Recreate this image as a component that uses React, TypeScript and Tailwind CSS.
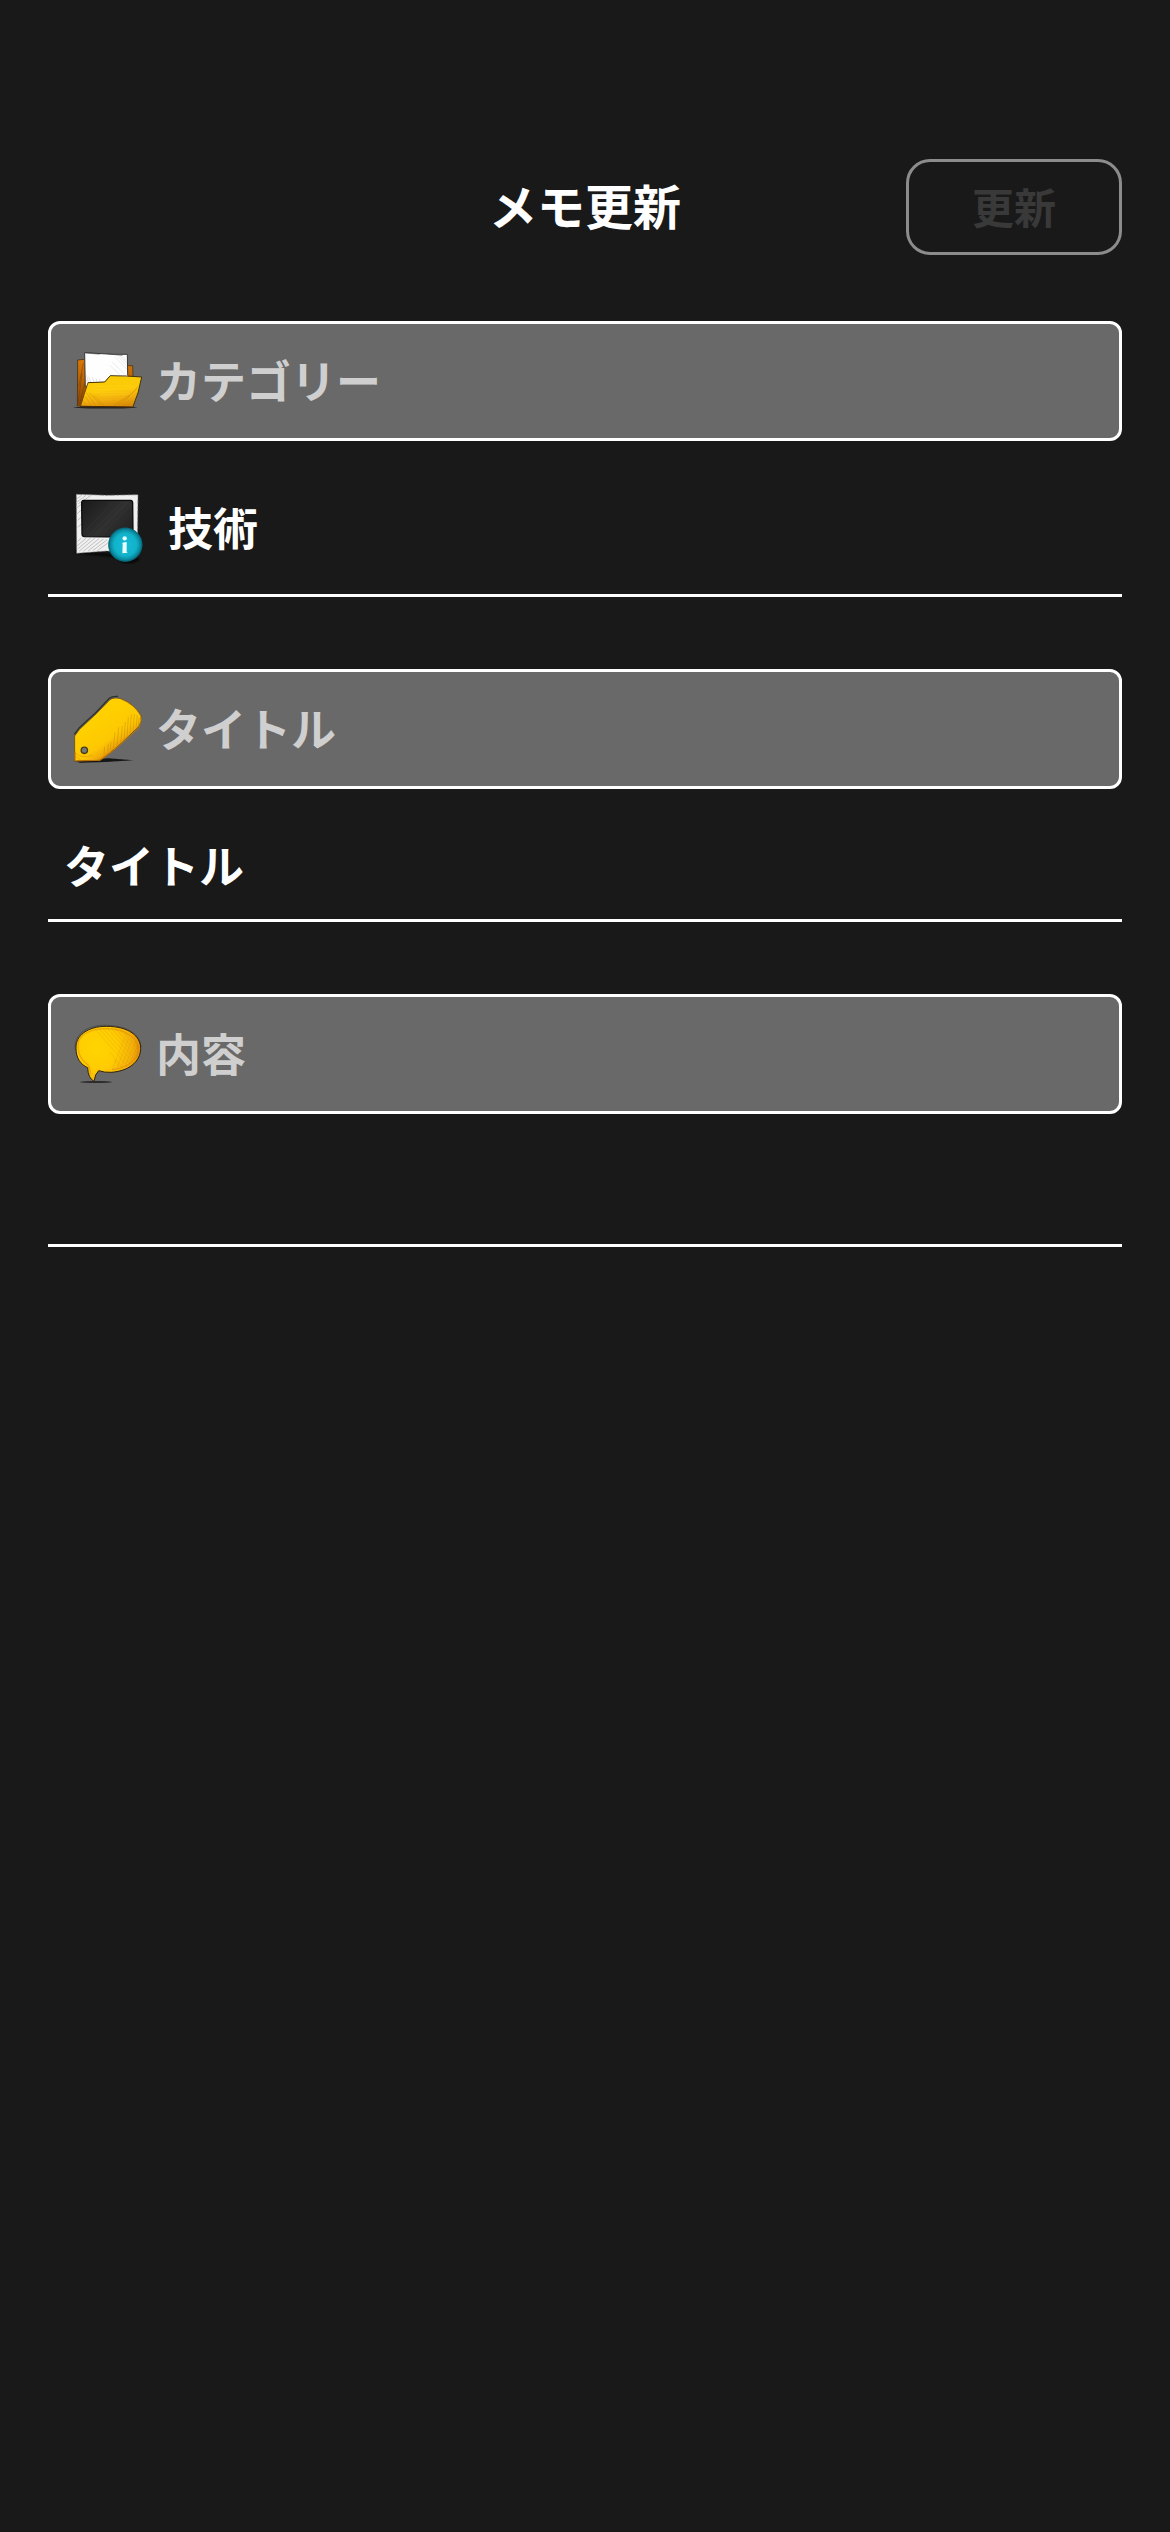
import React from "react";

function FolderIcon() {
  return (
    <svg viewBox="36 15 216 216" className="size-[72px] shrink-0" fill="none">
      <defs>
        <linearGradient id="folderFront" x1="150" y1="105" x2="160" y2="202" gradientUnits="userSpaceOnUse">
          <stop offset="0" stopColor="#f8cc06" />
          <stop offset="0.45" stopColor="#fdca08" />
          <stop offset="0.75" stopColor="#f2ae0e" />
          <stop offset="1" stopColor="#d88a08" />
        </linearGradient>
        <linearGradient id="folderBack" x1="60" y1="60" x2="62" y2="195" gradientUnits="userSpaceOnUse">
          <stop offset="0" stopColor="#d87808" />
          <stop offset="0.5" stopColor="#b35f05" />
          <stop offset="1" stopColor="#8a4705" />
        </linearGradient>
        <filter id="folderBlur" x="-20%" y="-100%" width="140%" height="300%">
          <feGaussianBlur stdDeviation="2" />
        </filter>
      </defs>
      <ellipse cx="136" cy="202" rx="96" ry="3.5" fill="#262626" filter="url(#folderBlur)" />
      <path d="M53 61 L72 58 L74 66 L203 76 L218 77 L218 120 L90 170 L62 200 L52 198Z" fill="url(#folderBack)" />
      <path d="M52 198 L53 60 L72 58 M204 77 L218 77 L219 108" stroke="#4a3115" strokeWidth="2.4" />
      <path d="M54 190 L66 100 M58 196 L74 130 M56 140 L70 70" stroke="#5e3408" strokeWidth="2" opacity="0.6" />
      <path d="M74 38 L160 43 L202 43 L203 112 L150 107 L134 125 L88 127 L76 142Z" fill="#fefefe" />
      <path d="M76 142 L74 38 L160 43 L202 43 L203 106" stroke="#262626" strokeWidth="2.6" />
      <path d="M78 39 L119 43 M140 41 L188 47" stroke="#444" strokeWidth="1.4" />
      <path d="M164 51 L200 87 M172 48 L201 77 M180 49 L201 69 M157 66 L194 103 M150 76 L178 104 M188 51 L200 62" stroke="#d4d4d4" strokeWidth="1.4" />
      <path d="M78 104 L86 125 M86 110 L92 126 M97 111 L102 125 M108 115 L110 125 M79 118 L83 129 M118 117 L122 124" stroke="#c6c6c6" strokeWidth="1.5" />
      <path d="M62 197 Q72 163 84 128 L134 126 L151 107 L245 111 Q236 159 219 200 L140 199Z" fill="url(#folderFront)" />
      <path d="M84 128 L134 126 L151 107 L200 108 L245 111 Q237 158 219 200" stroke="#3a2b0b" strokeWidth="2.8" />
      <path d="M84 128 Q72 163 62 197" stroke="#6e4807" strokeWidth="3" />
      <path d="M60 199 L140 200 L220 201" stroke="#4b2b06" strokeWidth="3" />
      <path d="M96 140 L160 138 L220 139 M104 149 L222 147 M98 157 L206 157 M120 165 L216 163" stroke="#ffda24" strokeWidth="1.3" opacity="0.8" />
      <path d="M185 196 L236 138 M174 196 L231 146 M194 196 L230 158 M204 196 L227 170 M162 196 L210 164 M80 158 L106 196 M76 170 L94 196 M88 158 L122 196 M70 184 L80 196 M100 166 L132 196" stroke="#a96806" strokeWidth="1.5" opacity="0.48" />
    </svg>
  );
}

function PhotoInfoIcon() {
  return (
    <svg viewBox="36 36 216 216" className="size-[72px] shrink-0" fill="none">
      <defs>
        <linearGradient id="photoGlass" x1="72" y1="64" x2="200" y2="180" gradientUnits="userSpaceOnUse">
          <stop offset="0" stopColor="#1b1b1b" />
          <stop offset="0.55" stopColor="#303030" />
          <stop offset="1" stopColor="#202020" />
        </linearGradient>
        <radialGradient id="infoDisc" cx="196" cy="194" r="52" gradientUnits="userSpaceOnUse">
          <stop offset="0" stopColor="#16bdd5" />
          <stop offset="0.65" stopColor="#11b2ca" />
          <stop offset="0.85" stopColor="#098da3" />
          <stop offset="1" stopColor="#065f70" />
        </radialGradient>
        <filter id="photoBlur" x="-20%" y="-50%" width="140%" height="200%">
          <feGaussianBlur stdDeviation="3" />
        </filter>
      </defs>
      <path d="M46 216 L170 228 Q200 260 236 235" stroke="#050505" strokeWidth="8" opacity="0.8" filter="url(#photoBlur)" />
      <path d="M49 43 L140 46 L234 44 L232 216 L140 213 L50 220Z" fill="#f0f0f0" />
      <path d="M49 43 L140 46 L234 44 L232 216 L140 213 L50 220Z" stroke="#797979" strokeWidth="2" strokeDasharray="17 4 9 3" />
      <path d="M51 56 L65 46 M51 66 L78 46 M55 71 L91 48 M53 184 L64 174 M52 197 L79 174 M53 207 L92 174 M57 214 L105 174 M70 214 L117 176 M84 213 L130 177 M98 212 L142 179 M112 212 L146 187 M51 83 L64 73 M51 101 L64 90 M53 121 L64 111 M53 142 L65 131" stroke="#a5a5a5" strokeWidth="1.9" />
      <path d="M71 61 L212 61 Q218 62 218 69 L219 164 Q218 171 211 171 L73 170 Q66 169 66 161 L65 69 Q65 62 71 61Z" fill="url(#photoGlass)" stroke="#0c0c0c" strokeWidth="4" />
      <path d="M86 165 L186 65 M103 166 L202 67 M122 167 L216 73 M73 157 L157 68" stroke="#424242" strokeWidth="2" opacity="0.45" />
      <circle cx="196" cy="194" r="51" fill="url(#infoDisc)" />
      <circle cx="196" cy="194" r="50" stroke="#08697a" strokeWidth="2" />
      <circle cx="194" cy="175" r="6.5" fill="#e8ffff" />
      <path d="M187 188 L200 186 L200 215 L203 218 L187 220 L188 194Z" fill="#e8ffff" />
    </svg>
  );
}

function TagIcon() {
  return (
    <svg viewBox="36 39 216 216" className="size-[72px] shrink-0" fill="none">
      <defs>
        <linearGradient id="tagBody" x1="115" y1="125" x2="176" y2="210" gradientUnits="userSpaceOnUse">
          <stop offset="0" stopColor="#ffcf00" />
          <stop offset="0.58" stopColor="#fdc803" />
          <stop offset="0.85" stopColor="#f0a90a" />
          <stop offset="1" stopColor="#c97805" />
        </linearGradient>
        <filter id="tagBlur" x="-20%" y="-100%" width="140%" height="300%">
          <feGaussianBlur stdDeviation="2" />
        </filter>
      </defs>
      <path d="M42 243 L145 235 L220 241 L135 246 L60 248Z" fill="#141414" filter="url(#tagBlur)" />
      <path d="M43 163 L58 143 L107 98 L148 55 Q156 48 174 49" stroke="#303030" strokeWidth="4" />
      <path d="M44 243 L44 168 L59 148 L108 102 L150 59 Q160 51 183 56 Q223 72 243 107 Q247 124 237 139 L177 196 Q143 226 120 241Z" fill="url(#tagBody)" stroke="#4d390d" strokeWidth="1.8" />
      <path d="M240 140 L177 197 Q143 227 120 241 L45 243 L45 215" stroke="#c17605" strokeWidth="3" />
      <path d="M182 57 Q222 72 242 107 Q247 122 238 138" stroke="#b97809" strokeWidth="2" />
      <path d="M153 185 L151 210 M165 156 L160 204 M176 142 L171 197 M187 138 L182 188 M196 126 L192 181 M205 112 L201 172 M214 103 L210 163 M223 102 L219 155 M232 104 L228 146 M237 114 L235 139 M145 191 L143 215 M134 200 L132 223" stroke="#ad7903" strokeWidth="1.4" opacity="0.75" />
      <path d="M49 221 Q66 237 98 225 M48 230 L62 240 M118 237 L166 202 M129 229 L198 171" stroke="#df960a" strokeWidth="1.6" />
      <circle cx="73" cy="211" r="9.5" fill="#777" stroke="#443c19" strokeWidth="4" />
    </svg>
  );
}

function SpeechIcon() {
  return (
    <svg viewBox="36 24 216 216" className="size-[72px] shrink-0" fill="none">
      <defs>
        <radialGradient id="speechBody" cx="108" cy="112" r="146" gradientUnits="userSpaceOnUse">
          <stop offset="0" stopColor="#ffd400" />
          <stop offset="0.45" stopColor="#ffcc02" />
          <stop offset="0.75" stopColor="#f6b20a" />
          <stop offset="1" stopColor="#d98007" />
        </radialGradient>
        <filter id="speechBlur" x="-20%" y="-100%" width="140%" height="300%">
          <feGaussianBlur stdDeviation="2" />
        </filter>
      </defs>
      <ellipse cx="108" cy="216" rx="47" ry="3" fill="#1b1b1b" opacity="0.8" filter="url(#speechBlur)" />
      <path d="M46 120 C40 72 82 43 142 46 C206 48 240 74 243 111" stroke="#3d3d3d" strokeWidth="1.6" />
      <path d="M83 173 C62 164 48 144 48 115 C46 77 83 49 139 49 C207 49 242 79 242 115 C242 157 203 184 153 187 Q134 188 116 182 Q105 192 102 214 Q84 204 83 173Z" fill="url(#speechBody)" stroke="#33250a" strokeWidth="3" />
      <path d="M54 98 C65 68 101 56 140 56 C195 57 232 82 235 116 C233 151 201 175 156 179" stroke="#da8507" strokeWidth="4" opacity="0.5" />
      <path d="M55 92 Q49 137 78 160 Q93 169 90 193" stroke="#e89308" strokeWidth="4" opacity="0.65" />
      <path d="M105 57 L198 163 M116 55 L207 158 M128 54 L216 153 M140 53 L224 147 M153 54 L231 141 M167 56 L235 132 M181 59 L238 123 M193 64 L239 115 M150 126 L185 170 M160 147 L179 173 M193 86 L156 180 M205 87 L170 177 M216 90 L182 174 M226 95 L195 169 M235 104 L207 162" stroke="#b8760a" strokeWidth="1.2" opacity="0.38" />
    </svg>
  );
}

function SectionLabel({ icon, children }: { icon: React.ReactNode; children: React.ReactNode }) {
  return (
    <div className="flex h-[120px] items-center gap-3 rounded-xl border-3 border-white bg-[#696969] px-[21px] text-[#cfcfcf]">
      {icon}
      <span className="pb-[3px]">{children}</span>
    </div>
  );
}

export default function App() {
  return (
    <main className="flex min-h-[2532px] w-full flex-col bg-[#191919] px-12 pt-[159px] font-['Noto_Sans_CJK_JP',sans-serif] text-[45px] leading-[60px] font-bold text-white">
      <header className="grid h-24 grid-cols-[216px_1fr_216px] items-center">
        <h1 className="col-start-2 pb-1.5 text-center text-[48px]">メモ更新</h1>
        <button
          disabled
          className="h-24 rounded-3xl border-3 border-[#8c8c8c] pb-[3px] text-[42px] text-[#393939]"
        >
          更新
        </button>
      </header>

      <section className="mt-[66px]">
        <SectionLabel icon={<FolderIcon />}>カテゴリー</SectionLabel>
        <div className="flex h-[156px] items-center gap-6 border-b-3 border-white px-6 pt-[21px]">
          <PhotoInfoIcon />
          <span className="pb-0.5">技術</span>
        </div>
      </section>

      <section className="mt-18">
        <SectionLabel icon={<TagIcon />}>タイトル</SectionLabel>
        <div className="flex h-[133px] items-center border-b-3 border-white px-4 pt-[21px]">タイトル</div>
      </section>

      <section className="mt-18">
        <SectionLabel icon={<SpeechIcon />}>内容</SectionLabel>
        <div className="h-[133px] border-b-3 border-white" />
      </section>
    </main>
  );
}
